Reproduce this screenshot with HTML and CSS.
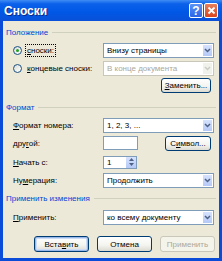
FILE: index.html
```html
<!DOCTYPE HTML>
<html>
<head>
<meta http-equiv="Content-Type" content="text/html; charset=utf-8">
<title>Сноски</title>
<link rel="stylesheet" href="styles.css">
</head>
<body>
<div class="window">
	<div class="titlebar">
		<span class="title">Сноски</span>
		<span class="tbBtn help">?</span>
		<span class="tbBtn close"><svg width="9" height="9" viewBox="0 0 9 9"><path d="M1.5 1.5 L7.5 7.5 M7.5 1.5 L1.5 7.5" stroke="#fff" stroke-width="1.8" fill="none"/></svg></span>
	</div>
	<div class="content">
		<div class="legend first"><span>Положение</span></div>

		<div class="row r1">
			<div class="radioLabel"><span class="radio on"></span><span class="focus"><u>с</u>носки:</span></div>
			<div class="select"><span class="val">Внизу страницы</span><span class="arrow"><svg width="7" height="5" viewBox="0 0 7 5"><path d="M1 1 L3.5 3.5 L6 1" stroke="#4D6185" stroke-width="1.5" fill="none"/></svg></span></div>
		</div>

		<div class="row r2">
			<div class="radioLabel"><span class="radio"></span><span class="plain"><u>к</u>онцевые сноски:</span></div>
			<div class="select off"><span class="val">В конце документа</span><span class="arrow"><svg width="7" height="5" viewBox="0 0 7 5"><path d="M1 1 L3.5 3.5 L6 1" stroke="#C9CCC2" stroke-width="1.5" fill="none"/></svg></span></div>
		</div>

		<div class="btnRow"><button class="btn replace"><u>З</u>аменить...</button></div>

		<div class="legend second"><span>Формат</span></div>

		<div class="row r3">
			<span class="lbl"><u>Ф</u>ормат номера:</span>
			<div class="select"><span class="val">1, 2, 3, ...</span><span class="arrow"><svg width="7" height="5" viewBox="0 0 7 5"><path d="M1 1 L3.5 3.5 L6 1" stroke="#4D6185" stroke-width="1.5" fill="none"/></svg></span></div>
		</div>

		<div class="row r4">
			<span class="lbl">дру<u>г</u>ой:</span>
			<div class="pair">
				<span class="textbox"></span>
				<button class="btn symbol">С<u>и</u>мвол...</button>
			</div>
		</div>

		<div class="row r5">
			<span class="lbl"><u>Н</u>ачать с:</span>
			<div class="spinner"><span class="val">1</span>
				<span class="spinBtns">
					<span class="spinUp"><svg width="5" height="3" viewBox="0 0 5 3"><path d="M0 3 L2.5 0 L5 3 Z" fill="#4D6185"/></svg></span>
					<span class="spinDown"><svg width="5" height="3" viewBox="0 0 5 3"><path d="M0 0 L2.5 3 L5 0 Z" fill="#4D6185"/></svg></span>
				</span>
			</div>
		</div>

		<div class="row r6">
			<span class="lbl">Ну<u>м</u>ерация:</span>
			<div class="select"><span class="val">Продолжить</span><span class="arrow"><svg width="7" height="5" viewBox="0 0 7 5"><path d="M1 1 L3.5 3.5 L6 1" stroke="#4D6185" stroke-width="1.5" fill="none"/></svg></span></div>
		</div>

		<div class="legend third"><span>Применить изменения</span></div>

		<div class="row r7">
			<span class="lbl"><u>П</u>рименить:</span>
			<div class="select"><span class="val">ко всему документу</span><span class="arrow"><svg width="7" height="5" viewBox="0 0 7 5"><path d="M1 1 L3.5 3.5 L6 1" stroke="#4D6185" stroke-width="1.5" fill="none"/></svg></span></div>
		</div>

		<div class="footer">
			<button class="btn default">Вста<u>в</u>ить</button>
			<button class="btn">Отмена</button>
			<button class="btn disabled">Применить</button>
		</div>
	</div>
</div>
</body>
</html>
```

FILE: styles.css
```css
@charset "utf-8";

body{
	margin:0;
	font-family:"Liberation Sans", Arial, sans-serif;
	font-size:8px;
	color:#000;
	background:#fff;
}

.window{
	width:222px;
	height:261px;
	display:flex;
	flex-direction:column;
	background:#0A4CD8;
}

.titlebar{
	height:21px;
	display:flex;
	align-items:center;
	padding:0 4px 0 4px;
	background:linear-gradient(#3E8CF4 0, #0C61EA 18%, #0058E6 55%, #0A50D8 100%);
}

.title{
	flex:1;
	color:#fff;
	font-weight:bold;
	font-size:12px;
	text-shadow:1px 1px 0 #0A2A8C;
}

.tbBtn{
	width:14px;
	height:15px;
	box-sizing:border-box;
	border:1px solid #fff;
	border-radius:2px;
	display:flex;
	align-items:center;
	justify-content:center;
	color:#fff;
	font-weight:bold;
	font-size:12px;
	margin-left:1px;
}

.help{
	background:linear-gradient(#5C93F5, #2A64E6);
}

.close{
	background:linear-gradient(#E8805C, #D8451E);
}

.content{
	flex:1;
	margin:0 3px 3px;
	background:#ECE9D8;
	display:flex;
	flex-direction:column;
}

.legend{
	height:14px;
	display:flex;
	align-items:center;
	padding-left:3px;
	padding-right:3px;
	color:#0046D5;
}

.legend:after{
	content:"";
	flex:1;
	height:1px;
	background:#D0D0BF;
	margin-left:4px;
}

.first{ margin-top:4px; }
.second{ margin-top:7px; }
.third{ margin-top:3px; }

.row{
	height:16px;
	display:grid;
	grid-template-columns:90px 111px;
	align-items:center;
	padding-left:10px;
}

.r1{ margin-top:3px; }
.r2{ margin-top:2px; }
.r3{ margin-top:3px; }
.r4{ margin-top:2px; }
.r5{ margin-top:3px; }
.r6{ margin-top:2px; }
.r7{ margin-top:4px; }

.radioLabel{
	display:flex;
	align-items:center;
}

.radio{
	width:9px;
	height:9px;
	box-sizing:border-box;
	border:1px solid #1C5180;
	border-radius:50%;
	background:linear-gradient(135deg, #DCDCD5, #fff);
	margin-right:4px;
	display:flex;
	align-items:center;
	justify-content:center;
}

.radio.on:after{
	content:"";
	width:3px;
	height:3px;
	border-radius:50%;
	background:#21A121;
}

.focus{
	outline:1px dotted #000;
	padding:1px 1px;
}

.plain{
	padding:1px 1px;
}

.select{
	height:15px;
	box-sizing:border-box;
	border:1px solid #7F9DB9;
	background:#fff;
	display:flex;
	align-items:center;
}

.select .val{
	flex:1;
	padding-left:3px;
}

.select .arrow{
	width:11px;
	height:13px;
	box-sizing:border-box;
	border:1px solid #fff;
	background:linear-gradient(#D6E2FD, #B5C9F7);
	display:flex;
	align-items:center;
	justify-content:center;
}

.select.off{
	border-color:#C9C7BA;
	color:#ACA899;
	background:#fff;
}

.select.off .arrow{
	background:#F1F1EC;
}

.btnRow{
	height:15px;
	margin-top:2px;
	display:flex;
	justify-content:flex-end;
	padding-right:8px;
}

.btn{
	font-family:"Liberation Sans", Arial, sans-serif;
	font-size:8px;
	color:#000;
	height:15px;
	padding:0;
	box-sizing:border-box;
	border:1px solid #003C74;
	border-radius:3px;
	background:linear-gradient(#FFFFFF, #F3F3EF 60%, #DCDAD0);
}

.replace{ width:50px; }

.pair{
	display:flex;
	align-items:center;
	justify-content:space-between;
	padding-right:3px;
}

.textbox{
	width:35px;
	height:14px;
	box-sizing:border-box;
	border:1px solid #7F9DB9;
	background:#fff;
}

.symbol{ width:46px; }

.spinner{
	width:34px;
	height:13px;
	box-sizing:border-box;
	border:1px solid #7F9DB9;
	background:#fff;
	display:flex;
	align-items:center;
}

.spinner .val{
	flex:1;
	padding-left:3px;
}

.spinBtns{
	width:10px;
	height:11px;
	display:flex;
	flex-direction:column;
	background:linear-gradient(#D6E2FD, #B5C9F7);
}

.spinUp, .spinDown{
	flex:1;
	display:flex;
	align-items:center;
	justify-content:center;
}

.footer{
	height:16px;
	margin-top:11px;
	display:flex;
	gap:8px;
	padding-left:31px;
}

.footer .btn{
	width:55px;
	height:16px;
}

.default{
	box-shadow:inset 0 0 0 1px #98B8EA, inset 0 0 0 2px #CEDCF6;
}

.disabled{
	border-color:#C9C7BA;
	color:#ACA899;
	background:#F5F4EA;
}
```
